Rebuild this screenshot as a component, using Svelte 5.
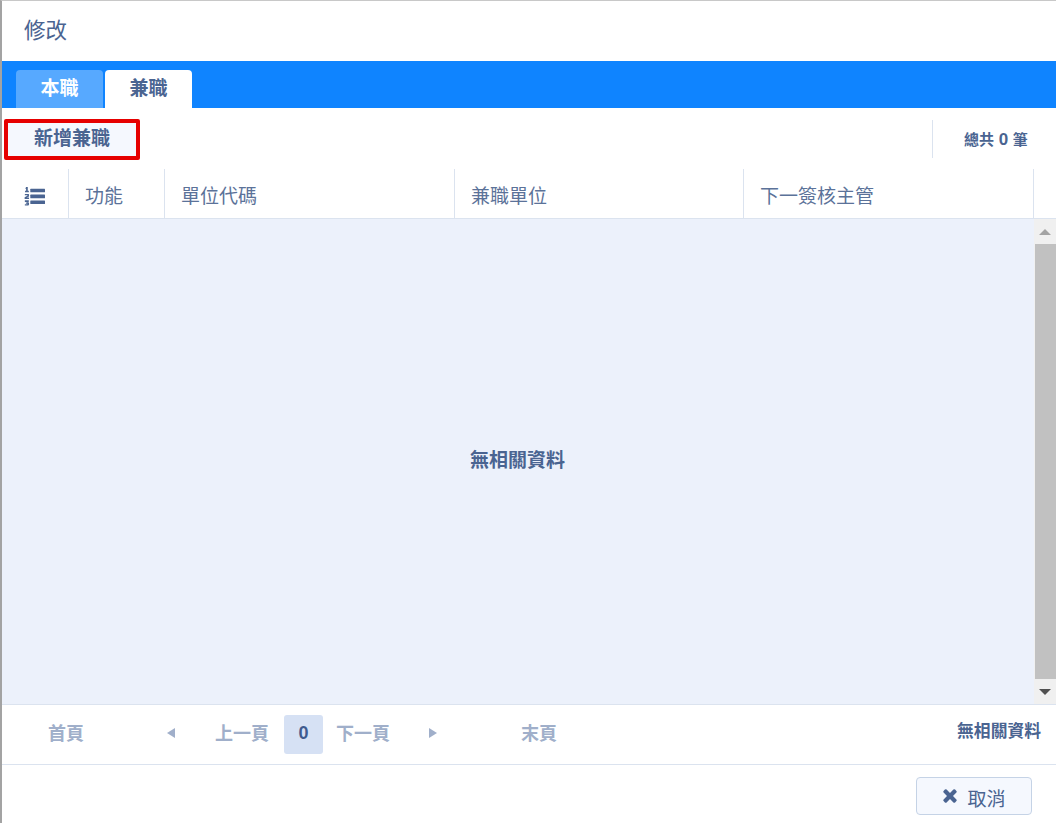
<script>
 const columns = [
     { name: "功能", width: 96 },
     { name: "單位代碼", width: 290 },
     { name: "兼職單位", width: 289 },
     { name: "下一簽核主管", width: 290 },
 ];
</script>

<div class="dialog">
    <header class="title">修改</header>

    <nav class="tabs">
        <div class="tab">本職</div>
        <div class="tab active">兼職</div>
    </nav>

    <div class="toolbar">
        <button class="add">新增兼職</button>
        <div class="total">總共 <b>0</b> 筆</div>
    </div>

    <div class="thead">
        <div class="th icon-cell">
            <svg width="21" height="19" viewBox="0 0 20 18" fill="#4a6491">
                <rect x="6" y="1.6" width="14" height="3.4" rx=".5" />
                <rect x="6" y="7.2" width="14" height="3.4" rx=".5" />
                <rect x="6" y="12.8" width="14" height="3.4" rx=".5" />
                <path d="M2 0h1.6v3.6h1V5H1V3.6h1V1.6H1.2z" />
                <path d="M.8 6.5h3.6l.4 .5v2l-2.2 1h2.2v1.3H.6V9.6l2.6-1.2v-.5H.8z" />
                <path d="M.8 12.5h3.8v1.4l-.6 .6.8 .6v1.6l-.6 .8H.8v-1.2h2.4v-.5H1.8v-1h1.4v-.5H.8z" />
            </svg>
        </div>
        {#each columns as col}
            <div class="th" style:width="{col.width}px">{col.name}</div>
        {/each}
    </div>

    <div class="tbody">
        <div class="empty">無相關資料</div>
        <div class="scrollbar">
            <div class="arrow"><span class="up"></span></div>
            <div class="thumb"></div>
            <div class="arrow"><span class="down"></span></div>
        </div>
    </div>

    <div class="pager">
        <div class="pages">
            <span class="link first">首頁</span>
            <span class="tri left"></span>
            <span class="link prev">上一頁</span>
            <span class="current">0</span>
            <span class="link next">下一頁</span>
            <span class="tri right"></span>
            <span class="link last">末頁</span>
        </div>
        <div class="info">無相關資料</div>
    </div>

    <footer class="footer">
        <button class="cancel">
            <svg width="16" height="16" viewBox="0 0 16 16" fill="#4a6491">
                <path d="M4.6 1.6 8 5l3.4-3.4a1.2 1.2 0 0 1 1.7 0l1.3 1.3a1.2 1.2 0 0 1 0 1.7L11 8l3.4 3.4a1.2 1.2 0 0 1 0 1.7l-1.3 1.3a1.2 1.2 0 0 1-1.7 0L8 11l-3.4 3.4a1.2 1.2 0 0 1-1.7 0l-1.3-1.3a1.2 1.2 0 0 1 0-1.7L5 8 1.6 4.6a1.2 1.2 0 0 1 0-1.7l1.3-1.3a1.2 1.2 0 0 1 1.7 0z" />
            </svg>
            <span class="cancel-label">取消</span>
        </button>
    </footer>
</div>

<style>
 :global(body) {
     background: #fff;
 }
 .dialog {
     width: 1056px;
     height: 823px;
     box-sizing: border-box;
     border-left: 2px solid #a3a3a3;
     border-top: 1px solid #c8c8c8;
     display: flex;
     flex-direction: column;
     font-family: "Liberation Sans", "Noto Sans CJK TC", sans-serif;
     color: #4a6491;
     overflow: hidden;
 }
 .title {
     height: 60px;
     flex: none;
     padding-left: 22px;
     font-size: 21.5px;
     line-height: 60px;
 }
 .tabs {
     height: 47px;
     flex: none;
     background: #0f84ff;
     box-sizing: border-box;
     padding: 9px 0 0 14px;
     display: flex;
     gap: 2px;
 }
 .tab {
     width: 87px;
     background: #57a9ff;
     color: #fff;
     font-size: 19px;
     font-weight: 700;
     text-align: center;
     line-height: 38px;
     border-radius: 4px 4px 0 0;
 }
 .tab.active {
     background: #fff;
     color: #4a6491;
 }
 .toolbar {
     height: 61px;
     flex: none;
     display: flex;
     justify-content: space-between;
     align-items: flex-start;
     padding-top: 11px;
     box-sizing: border-box;
 }
 .add {
     width: 136px;
     height: 41px;
     margin-left: 2px;
     background: #f5f8fe;
     border: 4px solid #e60000;
     border-radius: 2px;
     color: #4a6491;
     font: 700 19px "Liberation Sans", "Noto Sans CJK TC", sans-serif;
     padding: 0 0 6px;
 }
 .total {
     width: 124px;
     height: 38px;
     margin-top: 1px;
     box-sizing: border-box;
     border-left: 1px solid #dbe3ef;
     font-size: 15px;
     font-weight: 700;
     line-height: 40px;
     padding-left: 31px;
     word-spacing: .5px;
 }
 .total b {
     font-size: 17px;
 }
 .thead {
     height: 50px;
     flex: none;
     display: flex;
     box-sizing: border-box;
     border-bottom: 1px solid #dbe3ef;
 }
 .th {
     box-sizing: border-box;
     border-right: 1px solid #dbe3ef;
     font-size: 19px;
     line-height: 56px;
     padding-left: 16px;
     color: #5b7299;
 }
 .icon-cell {
     width: 67px;
     padding: 18px 0 0 22px;
     line-height: 0;
 }
 .tbody {
     height: 486px;
     flex: none;
     display: flex;
     box-sizing: border-box;
     background: #ecf1fb;
     border-bottom: 1px solid #dbe3ef;
 }
 .empty {
     flex: 1;
     display: flex;
     align-items: center;
     justify-content: center;
     font-size: 19px;
     font-weight: 700;
     padding: 0 1px 7px 0;
 }
 .scrollbar {
     width: 22px;
     flex: none;
     background: #f0f0f0;
     display: flex;
     flex-direction: column;
 }
 .thumb {
     flex: 1;
     background: #c1c1c1;
     margin-left: 1px;
 }
 .arrow {
     height: 25px;
     display: flex;
     align-items: center;
     justify-content: center;
 }
 .up, .down {
     width: 0;
     height: 0;
     border-left: 6px solid transparent;
     border-right: 6px solid transparent;
 }
 .up {
     border-bottom: 6px solid #a3a3a3;
 }
 .down {
     border-top: 6px solid #505050;
 }
 .pager {
     height: 60px;
     flex: none;
     box-sizing: border-box;
     border-bottom: 1px solid #dbe3ef;
     display: flex;
     justify-content: space-between;
     align-items: center;
 }
 .pages {
     display: flex;
     align-items: center;
     margin-bottom: 1px;
 }
 .link {
     font-size: 18px;
     font-weight: 700;
     color: #a0afca;
     margin-bottom: 4px;
 }
 .first {
     margin-left: 46px;
 }
 .tri {
     width: 0;
     height: 0;
     border-top: 5px solid transparent;
     border-bottom: 5px solid transparent;
     margin-bottom: 2px;
 }
 .tri.left {
     margin-left: 83px;
     border-right: 8px solid #a0afca;
 }
 .prev {
     margin-left: 40px;
 }
 .current {
     width: 39px;
     height: 39px;
     margin-left: 15px;
     background: #d6e1f4;
     border-radius: 3px;
     color: #3f5b8f;
     font-size: 18px;
     font-weight: 700;
     text-align: center;
     line-height: 36px;
 }
 .next {
     margin-left: 13px;
 }
 .tri.right {
     margin-left: 39px;
     border-left: 8px solid #a0afca;
 }
 .last {
     margin-left: 84px;
 }
 .info {
     font-size: 16.8px;
     font-weight: 700;
     margin: 0 15px 9px 0;
 }
 .footer {
     flex: 1;
     display: flex;
     justify-content: flex-end;
     padding: 12px 24px 0 0;
 }
 .cancel {
     width: 116px;
     height: 38px;
     background: #f5f8fe;
     border: 1px solid #c5d3e6;
     border-radius: 4px;
     color: #4a6491;
     font: 400 19px "Liberation Sans", "Noto Sans CJK TC", sans-serif;
     display: flex;
     align-items: center;
     justify-content: center;
     gap: 9px;
     padding: 0;
 }
 .cancel-label {
     padding-top: 2px;
 }
</style>
